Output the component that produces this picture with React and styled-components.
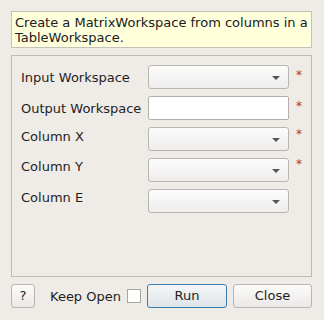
import React, { useState } from 'react'
import styled, { createGlobalStyle } from 'styled-components'

const GlobalStyle = createGlobalStyle`
  html, body {
    margin: 0;
    padding: 0;
    background: #efebe7;
  }
  body {
    font-family: "DejaVu Sans", "Liberation Sans", sans-serif;
    font-size: 13px;
    color: #1e1e1e;
  }
`;

const StyledDialog = styled.div`
  width: 324px;
  height: 320px;
  box-sizing: border-box;
  padding: 11px 12px 0 11px;
  display: flex;
  flex-direction: column;
  gap: 7px;
`;

const StyledDescription = styled.div`
  height: 37px;
  box-sizing: border-box;
  border: 1px solid #c4c0bb;
  background: #ffffdc;
  padding: 3px 3px 2px;
  line-height: 15px;
  color: #202020;
`;

const StyledGroup = styled.div`
  height: 222px;
  box-sizing: border-box;
  border: 1px solid #bdb9b4;
  padding: 9px 0 0 9px;
`;

const StyledGrid = styled.div`
  display: grid;
  grid-template-columns: 127px 141px 1fr;
  grid-auto-rows: 24px;
  row-gap: 7px;
`;

const StyledLabel = styled.div`
  display: flex;
  align-items: center;
  white-space: nowrap;
  transform: translateY(${(p) => -(p.$lift || 0)}px);
`;

const StyledCombo = styled.div`
  position: relative;
  box-sizing: border-box;
  border: 1px solid #b9b5b0;
  border-radius: 3px;
  background: linear-gradient(#fcfcfc, #eeedec);
`;

const StyledArrow = styled.span`
  position: absolute;
  right: 8px;
  top: 10px;
  width: 0;
  height: 0;
  border-left: 4px solid transparent;
  border-right: 4px solid transparent;
  border-top: 4px solid #565656;
`;

const StyledTextInput = styled.input`
  all: unset;
  box-sizing: border-box;
  background: #fff;
  border: 1px solid #b3afaa;
  border-radius: 2px;
  height: 24px;
`;

const StyledStar = styled.div`
  padding-left: 7px;
  color: #a83a3a;
  font-size: 12px;
  line-height: 24px;
  transform: translateY(${(p) => -2 - (p.$lift || 0)}px);
`;

const StyledBar = styled.div`
  display: flex;
  align-items: center;
  gap: 6px;
  height: 24px;
`;

const StyledButton = styled.button`
  all: unset;
  box-sizing: border-box;
  height: 24px;
  width: ${(p) => p.$width}px;
  text-align: center;
  border: 1px solid ${(p) => (p.$primary ? '#3d7eb0' : '#b9b5b0')};
  border-radius: 3px;
  background: ${(p) =>
    p.$primary
      ? 'linear-gradient(#f4f6f8, #dfe4e8)'
      : 'linear-gradient(#fbfbfa, #ebe9e7)'};
  font-family: "DejaVu Sans", "Liberation Sans", sans-serif;
  font-size: 13px;
  line-height: 22px;
  color: #1e1e1e;
  cursor: pointer;
`;

const StyledKeepOpen = styled.label`
  display: flex;
  align-items: center;
  gap: 6px;
  margin-left: 9px;
`;

const StyledCheck = styled.span`
  width: 14px;
  height: 14px;
  box-sizing: border-box;
  border: 1px solid #aaa6a1;
  background: #fff;
`;

const rows = [
  { label: 'Input Workspace', kind: 'combo', required: true },
  { label: 'Output Workspace', kind: 'text', required: true },
  { label: 'Column X', kind: 'combo', required: true, lift: 3 },
  { label: 'Column Y', kind: 'combo', required: true, lift: 4 },
  { label: 'Column E', kind: 'combo', required: false, lift: 4 },
];

function App() {
  const [output, setOutput] = useState('');
  const [keepOpen, setKeepOpen] = useState(false);

  return (
    <>
      <GlobalStyle />
      <StyledDialog>
        <StyledDescription>
          Create a MatrixWorkspace from columns in a TableWorkspace.
        </StyledDescription>
        <StyledGroup>
          <StyledGrid>
            {rows.map((row) => (
              <React.Fragment key={row.label}>
                <StyledLabel $lift={row.lift}>{row.label}</StyledLabel>
                {row.kind === 'combo' ? (
                  <StyledCombo>
                    <StyledArrow />
                  </StyledCombo>
                ) : (
                  <StyledTextInput
                    value={output}
                    onChange={(e) => setOutput(e.target.value)}
                  />
                )}
                <StyledStar $lift={row.lift}>{row.required ? '*' : ''}</StyledStar>
              </React.Fragment>
            ))}
          </StyledGrid>
        </StyledGroup>
        <StyledBar>
          <StyledButton $width={24}>?</StyledButton>
          <StyledKeepOpen onClick={() => setKeepOpen(!keepOpen)}>
            Keep Open
            <StyledCheck />
          </StyledKeepOpen>
          <StyledButton $width={80} $primary>Run</StyledButton>
          <StyledButton $width={79}>Close</StyledButton>
        </StyledBar>
      </StyledDialog>
    </>
  )
}

export default App
